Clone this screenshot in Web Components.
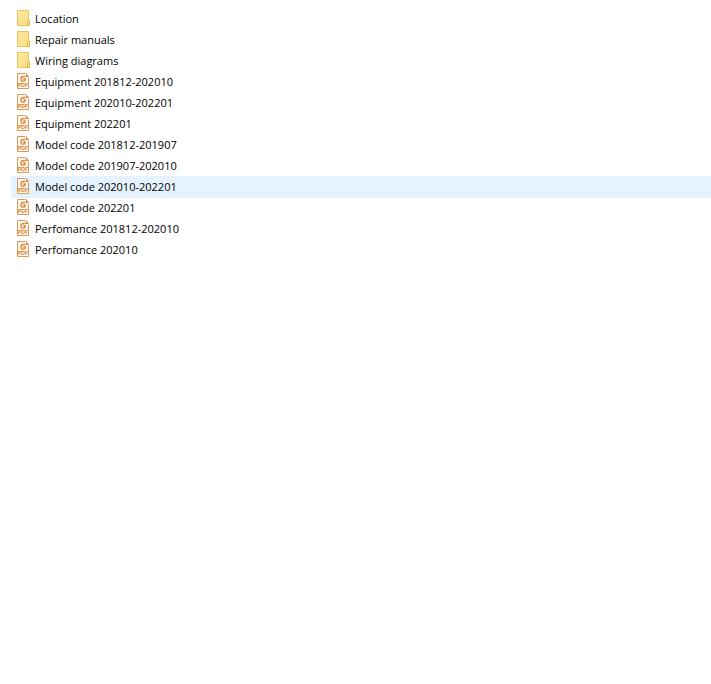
<!DOCTYPE html>
<html lang="en">
<head>
<meta charset="utf-8">
<title>Files</title>
<style>
body { margin: 0; background: #fff; color: #000; font: 11px/21px "Open Sans", "Noto Sans", sans-serif; }
</style>
</head>
<body>
<file-list>
  <file-row kind="folder">Location</file-row>
  <file-row kind="folder">Repair manuals</file-row>
  <file-row kind="folder">Wiring diagrams</file-row>
  <file-row kind="pdf">Equipment 201812-202010</file-row>
  <file-row kind="pdf">Equipment 202010-202201</file-row>
  <file-row kind="pdf">Equipment 202201</file-row>
  <file-row kind="pdf">Model code 201812-201907</file-row>
  <file-row kind="pdf">Model code 201907-202010</file-row>
  <file-row kind="pdf" active>Model code 202010-202201</file-row>
  <file-row kind="pdf">Model code 202201</file-row>
  <file-row kind="pdf">Perfomance 201812-202010</file-row>
  <file-row kind="pdf">Perfomance 202010</file-row>
</file-list>

<template id="list-template">
  <style>
    :host { display: block; padding: 8px 0 8px 11px; }
    nav { display: flex; flex-direction: column; }
  </style>
  <nav aria-label="Files"><slot></slot></nav>
</template>

<template id="row-template">
  <style>
    :host { display: block; }
    a { display: flex; align-items: center; gap: 4px; height: 21px; padding-left: 4px; color: inherit; text-decoration: none; white-space: nowrap; }
    :host([active]) a { background: #e5f3ff; box-shadow: 0 1px #e5f3ff; }
  </style>
  <a href="#"><file-icon></file-icon><span><slot></slot></span></a>
</template>

<template id="folder-template">
  <svg viewBox="0 0 16 17" width="16" height="17" aria-hidden="true">
    <defs><linearGradient id="g" x1="0" y1="0" x2="1" y2="1"><stop offset="0" stop-color="#ffe9a4"/><stop offset="1" stop-color="#fbdc7c"/></linearGradient></defs>
    <path d="M2.5 .5h11v10h1v5h-12z" fill="url(#g)" stroke="#e6c560"/>
    <path d="M12.5 15.5v-4l1-1h1v5z" fill="#ffe591" stroke="#dfb83f"/>
  </svg>
</template>

<template id="pdf-template">
  <style>text { font: bold 5px "Liberation Sans", sans-serif; fill: #dc7c24; }</style>
  <svg viewBox="0 0 16 17" width="16" height="17" aria-hidden="true">
    <path d="M10.5 .5h-8v15h11v-11" fill="#fffaf3" stroke="#dc9a54"/>
    <path d="M11 0v4h3z" fill="#d98a3f"/>
    <path d="M10.500 3.500H8.500C6.700 3.500 6 4.600 6 6S6.700 8.200 8 8.200s2.200-.8 2.200-2.200H8.200" fill="none" stroke="#e28330" stroke-width="1.300"/>
    <text x="8" y="14" text-anchor="middle">PDF</text>
  </svg>
</template>

<script>
const stamp = (host, id) => {
  const root = host.attachShadow({ mode: "open" });
  root.append(document.getElementById(id).content.cloneNode(true));
  return root;
};
customElements.define("file-icon", class extends HTMLElement {
  connectedCallback() {
    if (this.shadowRoot) return;
    const root = stamp(this, this.getAttribute("kind") + "-template");
    const style = document.createElement("style");
    style.textContent = ":host{display:block;flex:none;width:16px;height:17px} svg{display:block}";
    root.prepend(style);
  }
});
customElements.define("file-row", class extends HTMLElement {
  connectedCallback() {
    if (this.shadowRoot) return;
    const root = this.attachShadow({ mode: "open" });
    const part = document.getElementById("row-template").content.cloneNode(true);
    part.querySelector("file-icon").setAttribute("kind", this.getAttribute("kind"));
    root.append(part);
  }
});
customElements.define("file-list", class extends HTMLElement {
  connectedCallback() { if (!this.shadowRoot) stamp(this, "list-template"); }
});
</script>
</body>
</html>
